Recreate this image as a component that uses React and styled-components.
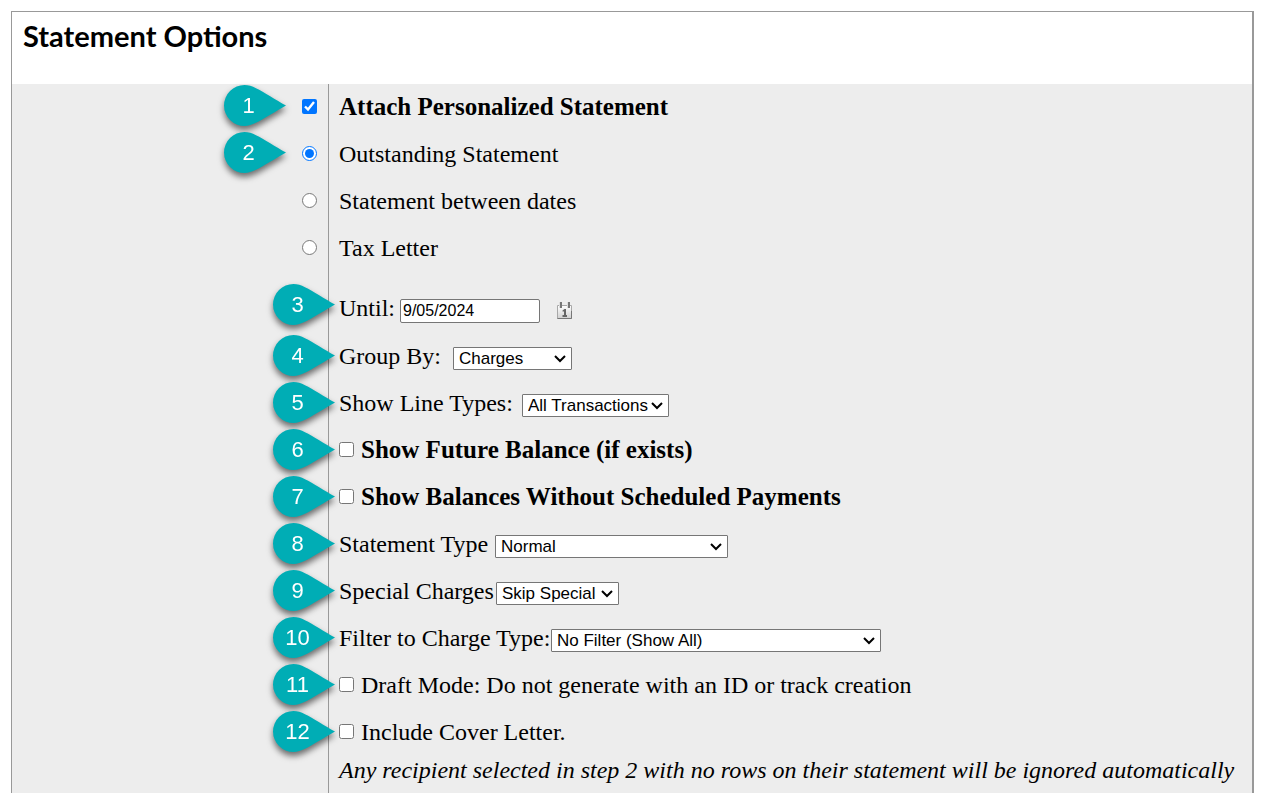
import React from "react";
import styled, { createGlobalStyle } from "styled-components";

const GlobalStyle = createGlobalStyle`
    *, *::before, *::after {
        box-sizing: border-box;
    }

    body {
        margin: 0;
        background: #fff;
        color: #000;
        font-family: "Liberation Serif", "Times New Roman", serif;
        font-size: 24px;
        line-height: 28px;
    }
`;

const Page = styled.main`
    min-height: 100vh;
    padding: 11px 20px 0 11px;
    display: flex;
    flex-direction: column;
`;

const Panel = styled.form`
    flex: 1;
    display: flex;
    flex-direction: column;
    border: 1px solid #999;
    border-right-width: 2px;
    border-bottom: 0;
`;

const PanelHeader = styled.header`
    height: 72px;
    padding: 8px 11px;
`;

const Title = styled.h1`
    margin: 0;
    font-family: Lato, sans-serif;
    font-size: 29px;
    line-height: 32px;
    font-weight: 700;
`;

const Options = styled.div`
    flex: 1;
    display: flex;
    flex-direction: column;
    background: #ededed;
`;

const OptionRow = styled.div`
    display: grid;
    grid-template-columns: 316px 1fr;
    flex: ${props => (props.$fill ? "1 0 auto" : "none")};
`;

const ControlCell = styled.div`
    position: relative;
    display: flex;
    align-items: center;
    justify-content: flex-end;
    padding: 0 11px 2px 0;
`;

const FieldCell = styled.div`
    position: relative;
    display: flex;
    align-items: center;
    min-height: ${props => (props.$spaced ? "61px" : "47px")};
    padding: ${props => (props.$spaced ? "12px" : "0")} 0 2px 10px;
    border-left: 1px solid #999;
    font-size: ${props => (props.$bold ? "25px" : "24px")};
    font-weight: ${props => (props.$bold ? "bold" : "normal")};
`;

const NoteCell = styled(FieldCell)`
    align-items: flex-start;
    min-height: 37px;
    font-style: italic;
`;

const FieldLabel = styled.label`
    width: ${props => props.$width}px;
    white-space: nowrap;
`;

const Check = styled.input.attrs({ type: "checkbox" })`
    width: 15px;
    height: 15px;
    margin: 0;
    accent-color: #0075ff;
`;

const InlineCheck = styled(Check)`
    margin: 0 7px 0 0;
`;

const Radio = styled.input.attrs({ type: "radio" })`
    width: 15px;
    height: 15px;
    margin: 0;
    accent-color: #0075ff;
`;

const DateInput = styled.input`
    width: 140px;
    height: 24px;
    margin-top: 6px;
    padding: 1px 2px;
    border: 1px solid #767676;
    border-radius: 2px;
    background: #fff;
    font-family: "Liberation Sans", Arial, sans-serif;
    font-size: 16px;
`;

const SelectBox = styled.span`
    position: relative;
    display: flex;
    width: ${props => props.$width}px;
    margin-top: 6px;

    svg {
        position: absolute;
        top: 8px;
        right: 6px;
        pointer-events: none;
    }
`;

const Select = styled.select`
    appearance: none;
    width: 100%;
    height: 23px;
    padding: 0 0 0 5px;
    border: 1px solid #767676;
    border-radius: 1px;
    background: #fff;
    color: #000;
    font-family: "Liberation Sans", Arial, sans-serif;
    font-size: 17px;
    line-height: 21px;
`;

const CalendarButton = styled.button`
    display: flex;
    margin: 6px 0 0 17px;
    padding: 0;
    border: 0;
    background: none;
`;

const PinBox = styled.span`
    position: absolute;
    top: ${props => (props.$spaced ? "12px" : props.$overDivider ? "2px" : "1px")};
    left: ${props => (props.$overDivider ? "-56px" : "212px")};
    width: 62px;
    height: 41px;
    filter: drop-shadow(0 4px 3px rgba(0, 0, 0, 0.55));

    svg {
        display: block;
    }
`;

const PinNumber = styled.span`
    position: absolute;
    inset: 0 13px 0 0;
    color: #fff;
    font-family: "Liberation Sans", Arial, sans-serif;
    font-size: 22px;
    font-weight: normal;
    line-height: 41px;
    text-align: center;
`;

const Pin = ({ number, overDivider, spaced }) => (
    <PinBox $overDivider={overDivider} $spaced={spaced}>
        <svg width="62" height="41" viewBox="0 0 62 41" aria-hidden="true">
            <path
                d="M62 20.5C52 15 40 7 32 3.2C28 1.2 24.5 0 20.5 0A20.5 20.5 0 0 0 20.5 41C24.5 41 28 39.8 32 37.8C40 34 52 26 62 20.5Z"
                fill="#00adb5"
            />
        </svg>
        <PinNumber>{number}</PinNumber>
    </PinBox>
);

const CalendarIcon = () => (
    <svg width="16" height="18" viewBox="0 0 16 18" aria-hidden="true">
        <defs>
            <linearGradient id="calendar-face" x1="0" y1="0" x2="0" y2="1">
                <stop offset="0" stopColor="#fff" />
                <stop offset="1" stopColor="#d0d0d0" />
            </linearGradient>
        </defs>
        <path d="M.5 3.5H14.5V16.5H.5Z" fill="url(#calendar-face)" stroke="#a8a8a8" />
        <path d="M.5 16.5H14.5V9" fill="none" stroke="#777" />
        <path d="M2 0h3v6H2zM10 0h3v6h-3z" fill="#ddd" />
        <path d="M3 0h2v6H3zM11 0h2v6h-2z" fill="#777" />
        <path d="M5.5 8.5L7.5 7H9v6h1v2H5.500v-2H7V9.500H5.500Z" fill="#666" />
    </svg>
);

const Chevron = () => (
    <svg width="12" height="8" viewBox="0 0 12 8" aria-hidden="true">
        <path d="M1 1L6 6L11 1" fill="none" stroke="#000" strokeWidth="2" />
    </svg>
);

const statementKinds = [
    { id: "outstanding", label: "Outstanding Statement", pin: 2 },
    { id: "between", label: "Statement between dates" },
    { id: "tax", label: "Tax Letter" }
];

const SelectRow = ({ pin, id, label, labelWidth, width, options }) => (
    <OptionRow>
        <ControlCell />
        <FieldCell>
            <Pin number={pin} overDivider />
            <FieldLabel htmlFor={id} $width={labelWidth}>
                {label}
            </FieldLabel>
            <SelectBox $width={width}>
                <Select id={id}>
                    {options.map(option => (
                        <option key={option}>{option}</option>
                    ))}
                </Select>
                <Chevron />
            </SelectBox>
        </FieldCell>
    </OptionRow>
);

const CheckRow = ({ pin, id, label, bold }) => (
    <OptionRow>
        <ControlCell />
        <FieldCell $bold={bold}>
            <Pin number={pin} overDivider />
            <InlineCheck id={id} />
            <label htmlFor={id}>{label}</label>
        </FieldCell>
    </OptionRow>
);

export default function App() {
    return (
        <>
            <GlobalStyle />
            <Page>
                <Panel>
                    <PanelHeader>
                        <Title>Statement Options</Title>
                    </PanelHeader>
                    <Options>
                        <OptionRow>
                            <ControlCell>
                                <Pin number={1} />
                                <Check id="attach" defaultChecked />
                            </ControlCell>
                            <FieldCell $bold>
                                <label htmlFor="attach">Attach Personalized Statement</label>
                            </FieldCell>
                        </OptionRow>
                        {statementKinds.map(({ id, label, pin }) => (
                            <OptionRow key={id}>
                                <ControlCell>
                                    {pin && <Pin number={pin} />}
                                    <Radio
                                        id={id}
                                        name="statementKind"
                                        defaultChecked={id === "outstanding"}
                                    />
                                </ControlCell>
                                <FieldCell>
                                    <label htmlFor={id}>{label}</label>
                                </FieldCell>
                            </OptionRow>
                        ))}
                        <OptionRow>
                            <ControlCell />
                            <FieldCell $spaced>
                                <Pin number={3} overDivider spaced />
                                <FieldLabel htmlFor="until" $width={61}>
                                    Until:
                                </FieldLabel>
                                <DateInput id="until" type="text" defaultValue="9/05/2024" />
                                <CalendarButton type="button" aria-label="Choose date">
                                    <CalendarIcon />
                                </CalendarButton>
                            </FieldCell>
                        </OptionRow>
                        <SelectRow
                            pin={4}
                            id="groupBy"
                            label="Group By:"
                            labelWidth={114}
                            width={119}
                            options={["Charges"]}
                        />
                        <SelectRow
                            pin={5}
                            id="lineTypes"
                            label="Show Line Types:"
                            labelWidth={183}
                            width={147}
                            options={["All Transactions"]}
                        />
                        <CheckRow pin={6} id="future" label="Show Future Balance (if exists)" bold />
                        <CheckRow
                            pin={7}
                            id="unscheduled"
                            label="Show Balances Without Scheduled Payments"
                            bold
                        />
                        <SelectRow
                            pin={8}
                            id="statementType"
                            label="Statement Type"
                            labelWidth={156}
                            width={233}
                            options={["Normal"]}
                        />
                        <SelectRow
                            pin={9}
                            id="specialCharges"
                            label="Special Charges"
                            labelWidth={157}
                            width={123}
                            options={["Skip Special"]}
                        />
                        <SelectRow
                            pin={10}
                            id="chargeType"
                            label="Filter to Charge Type:"
                            labelWidth={212}
                            width={330}
                            options={["No Filter (Show All)"]}
                        />
                        <CheckRow
                            pin={11}
                            id="draft"
                            label="Draft Mode: Do not generate with an ID or track creation"
                        />
                        <CheckRow pin={12} id="cover" label="Include Cover Letter." />
                        <OptionRow $fill>
                            <ControlCell />
                            <NoteCell>
                                Any recipient selected in step 2 with no rows on their statement
                                will be ignored automatically
                            </NoteCell>
                        </OptionRow>
                    </Options>
                </Panel>
            </Page>
        </>
    );
}
